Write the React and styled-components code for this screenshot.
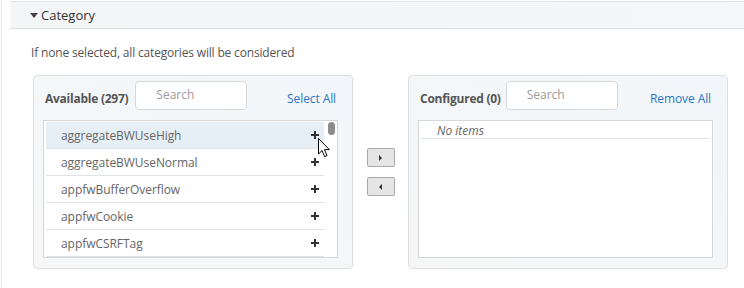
import React from "react";
import styled, { createGlobalStyle } from "styled-components";

const GlobalStyle = createGlobalStyle`
  html, body {
    margin: 0;
    padding: 0;
    background: #fff;
  }
  body {
    font-family: "Open Sans", "Liberation Sans", sans-serif;
    color: #555;
  }
`;

const Page = styled.div`
  box-sizing: border-box;
  width: 743px;
  height: 288px;
  margin-left: 1px;
  padding-top: 1px;
  border-left: 1px solid #e4e6e8;
  overflow: hidden;
`;

const SectionHeader = styled.div`
  margin-left: 8px;
  height: 26px;
  border-top: 1px solid #e1e5e8;
  border-bottom: 1px solid #dde1e5;
  background: linear-gradient(to right, #f3f5f7, #f3f7fa);
  display: flex;
  align-items: center;
  padding-left: 20px;
  font-size: 13px;
  color: #333;
`;

const Caret = styled.span`
  width: 0;
  height: 0;
  border-left: 4.5px solid transparent;
  border-right: 4.5px solid transparent;
  border-top: 5px solid #444;
  margin-right: 3px;
  margin-top: 1px;
`;

const Hint = styled.div`
  margin: 16px 0 0 29px;
  font-size: 12px;
  line-height: 16px;
  letter-spacing: -0.17px;
  color: #555;
`;

const PanelsRow = styled.div`
  display: flex;
  margin: 14px 0 0 31px;
`;

const Panel = styled.div`
  position: relative;
  box-sizing: border-box;
  width: 320px;
  height: 194px;
  padding: 5px 0 0 9px;
  border: 1px solid #dcdfe2;
  border-radius: 4px;
  background: linear-gradient(to top right, #f6f6f6, #f2f6fa);
`;

const PanelHead = styled.div`
  display: flex;
  align-items: center;
  width: 295px;
  box-sizing: border-box;
  height: 29px;
  padding: 0 2px;
`;

const PanelTitle = styled.div`
  font-size: 12px;
  font-weight: 700;
  letter-spacing: -0.25px;
  color: #555;
  padding-top: 5px;
  margin-right: ${(p) => p.$gap}px;
  white-space: nowrap;
`;

const SearchBox = styled.input`
  box-sizing: border-box;
  width: 112px;
  height: 29px;
  border: 1px solid #d6d9dc;
  border-radius: 4px;
  background: #fff;
  padding: 0 0 3px 20px;
  font-family: inherit;
  font-size: 12px;
  color: #555;
  outline: none;
  &::placeholder {
    color: #9a9a9a;
  }
`;

const HeadLink = styled.a`
  margin-left: auto;
  padding-top: 5px;
  font-size: 12px;
  letter-spacing: -0.1px;
  color: #2a78c6;
  text-decoration: none;
  cursor: pointer;
`;

const ListBox = styled.div`
  position: relative;
  box-sizing: border-box;
  width: 295px;
  height: 138px;
  margin-top: 10px;
  border: 1px solid #d5d8db;
  background: #fff;
  padding: ${(p) => (p.$scroll ? "1px 13px 0 2px" : "0 2px")};
  overflow: hidden;
`;

const Row = styled.div`
  display: flex;
  align-items: center;
  justify-content: space-between;
  height: 26px;
  padding: 0 5px 0 15px;
  border-bottom: 1px solid #e0e3e6;
  background: ${(p) => (p.$active ? "#e7eff6" : "#fff")};
  font-size: 12px;
  letter-spacing: -0.05px;
  color: #666;
`;

const EmptyRow = styled.div`
  height: 17px;
  line-height: 19px;
  padding-left: 16px;
  border-bottom: 1px solid #e0e3e6;
  font-size: 12px;
  font-style: italic;
  color: #666;
`;

const Plus = styled.span`
  position: relative;
  width: 8px;
  height: 8px;
  &::before,
  &::after {
    content: "";
    position: absolute;
    background: #333;
  }
  &::before {
    left: 0;
    top: 3px;
    width: 8px;
    height: 2px;
  }
  &::after {
    left: 3px;
    top: 0;
    width: 2px;
    height: 8px;
  }
`;

const Thumb = styled.div`
  position: absolute;
  top: 1px;
  right: 2px;
  width: 7px;
  height: 13px;
  border-radius: 3.5px;
  background: #8c8c8c;
`;

const Pointer = styled.svg`
  position: absolute;
  left: 274px;
  top: 17px;
`;

const Mover = styled.div`
  width: 55px;
  display: flex;
  flex-direction: column;
  align-items: center;
  justify-content: center;
  gap: 10px;
`;

const MoveButton = styled.button`
  box-sizing: border-box;
  width: 28px;
  height: 19px;
  padding: 0;
  border: 1px solid #a9a9a9;
  border-radius: 2px;
  background: #e5e5e5;
  display: flex;
  align-items: center;
  justify-content: center;
  cursor: pointer;
`;

const Arrow = styled.span`
  width: 0;
  height: 0;
  border-top: 3px solid transparent;
  border-bottom: 3px solid transparent;
  ${(p) =>
    p.$dir === "right"
      ? "border-left: 3px solid #333;"
      : "border-right: 3px solid #333;"}
`;

const available = [
  "aggregateBWUseHigh",
  "aggregateBWUseNormal",
  "appfwBufferOverflow",
  "appfwCookie",
  "appfwCSRFTag",
];

export default function App() {
  return (
    <>
      <GlobalStyle />
      <Page>
        <SectionHeader>
          <Caret />
          Category
        </SectionHeader>
        <Hint>If none selected, all categories will be considered</Hint>
        <PanelsRow>
          <Panel>
            <PanelHead>
              <PanelTitle $gap={7}>Available (297)</PanelTitle>
              <SearchBox placeholder="Search" />
              <HeadLink>Select All</HeadLink>
            </PanelHead>
            <ListBox $scroll>
              {available.map((name, i) => (
                <Row key={name} $active={i === 0}>
                  {name}
                  <Plus />
                </Row>
              ))}
              <Thumb />
              <Pointer width="13" height="20" viewBox="0 0 13 20">
                <path
                  d="M0.5 0.5 L0.5 16 L4 12.6 L6.6 18.6 L9 17.6 L6.5 11.6 L11.3 11.6 Z"
                  fill="#fff"
                  stroke="#000"
                  strokeWidth="1"
                  strokeLinejoin="round"
                />
              </Pointer>
            </ListBox>
          </Panel>
          <Mover>
            <MoveButton>
              <Arrow $dir="right" />
            </MoveButton>
            <MoveButton>
              <Arrow $dir="left" />
            </MoveButton>
          </Mover>
          <Panel>
            <PanelHead>
              <PanelTitle $gap={5}>Configured (0)</PanelTitle>
              <SearchBox placeholder="Search" />
              <HeadLink>Remove All</HeadLink>
            </PanelHead>
            <ListBox>
              <EmptyRow>No items</EmptyRow>
            </ListBox>
          </Panel>
        </PanelsRow>
      </Page>
    </>
  );
}
